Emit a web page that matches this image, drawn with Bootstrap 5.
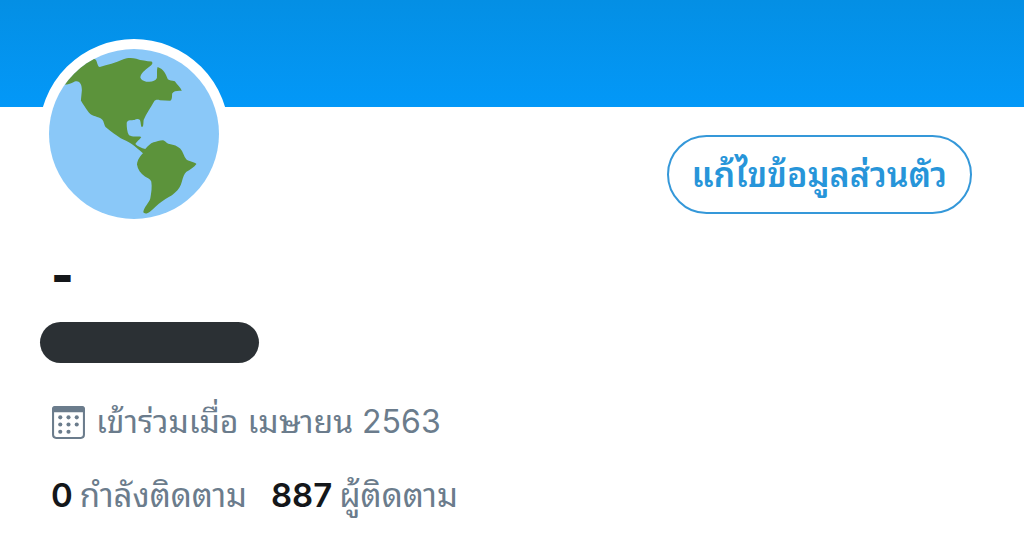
<!DOCTYPE html>
<html lang="th">
<head>
<meta charset="utf-8">
<meta name="viewport" content="width=device-width, initial-scale=1">
<title>โปรไฟล์</title>
<link href="https://cdn.jsdelivr.net/npm/bootstrap@5.3.0/dist/css/bootstrap.min.css" rel="stylesheet">
<style>
  body { font-family: Inter, "Noto Sans Thai Looped", "Loma", "Noto Sans Thai", "Noto Sans", sans-serif; color: #14171a; font-size: 32px; line-height: 48px; }
  .banner { height: 107px; background: linear-gradient(#048fe4, #0398f8); }
  .profile { padding: 0 52px 0 51px; }
  .avatar { width: 190px; height: 190px; margin: -68px 0 0 -12px; border: 10px solid #fff; background: #fff; }
  .edit-btn { --bs-btn-color: #2795d9; --bs-btn-border-color: #3598d9; --bs-btn-border-width: 2px; --bs-btn-font-size: 34px; --bs-btn-font-weight: 600; --bs-btn-line-height: 48px; --bs-btn-padding-x: 23px; height: 79px; margin-top: 28px; }
  .display-title { font-size: 48px; line-height: 56px; font-weight: 900; margin: 18px 0 0; }
  .handle { width: 219px; height: 41px; background: #2b3034; margin: 19px 0 0 -11px; }
  .muted { color: #6b7c8c; }
  .joined { margin-top: 35px; gap: 10px; }
  .stats { margin-top: 25px; gap: 24px; font-size: 33px; }
  .stats a { color: #6b7c8c; gap: 7px; }
  .stats strong { color: #14171a; font-weight: 600; }
</style>
</head>
<body class="bg-white">
<header class="banner"></header>
<main class="profile">
  <div class="d-flex justify-content-between align-items-start">
    <div class="avatar rounded-circle flex-shrink-0">
      <svg class="d-block w-100 h-100" viewBox="54 56 512 512" role="img" aria-label="ลูกโลก">
        <defs><clipPath id="globe"><circle cx="310" cy="312" r="256"/></clipPath></defs>
        <circle cx="310" cy="312" r="256" fill="#8ac8f8"/>
        <g clip-path="url(#globe)" fill="#5c933b">
          <path d="M90 163 L108 163 C125 159 129 153 137 153 C149 154 153 165 153 180 L150 211 C156 221 164 234 174 247 C185 261 202 257 214 268 C221 276 219 286 227 293 C240 305 256 315 270 325 C280 331 292 334 303 342 C314 350 326 360 337 370 C329 378 320 390 319 404 C321 419 330 431 343 440 C350 445 359 447 362 455 C365 472 362 490 359 506 C355 520 341 530 338 547 C341 553 349 553 358 546 C372 535 381 523 394 515 C409 504 422 500 433 489 C445 479 451 469 454 456 C458 443 461 432 468 426 C478 419 492 412 498 402 C493 396 476 396 468 389 C460 380 458 365 449 356 C441 348 430 344 417 342 C407 341 405 332 397 331 C387 331 378 335 369 337 C359 340 352 349 344 357 C333 355 321 349 314 342 C318 335 327 329 332 321 C322 317 307 323 295 316 C289 306 288 292 288 278 C291 269 302 271 311 270 C318 266 323 266 328 270 C331 278 330 287 333 291 C339 292 338 281 339 270 C347 250 360 234 370 215 C373 209 380 208 388 210 L419 212 C426 209 424 196 425 190 C429 182 442 181 454 182 C450 171 440 163 433 153 C424 151 417 151 412 147 C406 132 400 116 381 110 C378 118 380 132 379 143 C375 151 367 154 356 155 C344 155 332 151 329 141 C332 126 344 120 354 111 C363 106 369 99 363 94 C348 91 332 91 317 85 C304 82 289 82 278 87 C253 98 231 104 207 110 C200 109 200 96 195 88 L160 70 Z"/>
        </g>
      </svg>
    </div>
    <button type="button" class="btn edit-btn rounded-pill text-nowrap">แก้ไขข้อมูลส่วนตัว</button>
  </div>
  <h1 class="display-title">-</h1>
  <div class="handle rounded-pill"></div>
  <div class="joined muted d-flex align-items-center">
    <svg width="35" height="35" viewBox="0 0 34 34" aria-hidden="true">
      <rect x="2" y="2" width="30" height="30" rx="3" fill="none" stroke="currentColor" stroke-width="2"/>
      <path d="M1 7V4a3 3 0 0 1 3-3h26a3 3 0 0 1 3 3v3z" fill="currentColor"/>
      <g fill="currentColor"><circle cx="9" cy="12" r="2"/><circle cx="17" cy="12" r="2"/><circle cx="25" cy="12" r="2"/><circle cx="9" cy="19" r="2"/><circle cx="17" cy="19" r="2"/><circle cx="25" cy="19" r="2"/><circle cx="9" cy="26" r="2"/><circle cx="17" cy="26" r="2"/></g>
    </svg>
    <span>เข้าร่วมเมื่อ เมษายน 2563</span>
  </div>
  <nav class="stats d-flex flex-wrap">
    <a href="#" class="text-decoration-none d-flex"><strong>0</strong> <span>กำลังติดตาม</span></a>
    <a href="#" class="text-decoration-none d-flex"><strong>887</strong> <span>ผู้ติดตาม</span></a>
  </nav>
</main>
<script src="https://cdn.jsdelivr.net/npm/bootstrap@5.3.0/dist/js/bootstrap.bundle.min.js"></script>
</body>
</html>
